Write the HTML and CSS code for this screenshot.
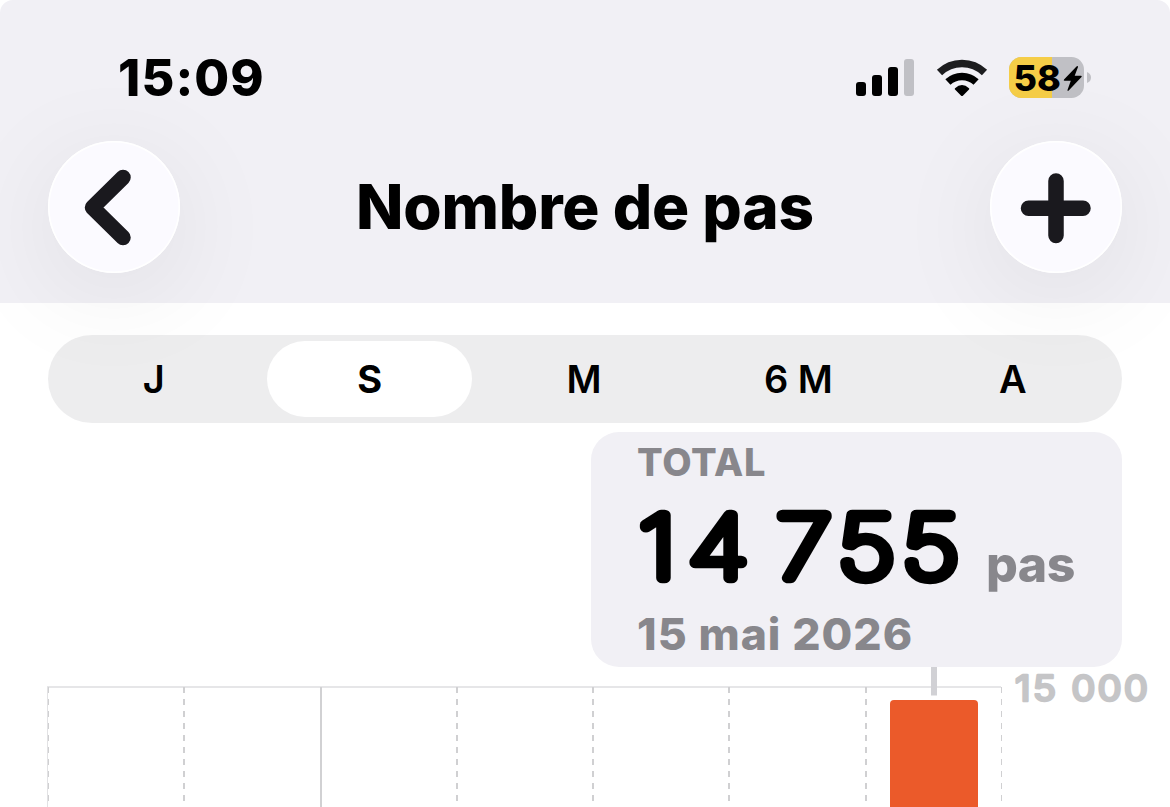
FILE: index.html
```
<!DOCTYPE html>
<html lang="fr">
<head>
  <meta charset="UTF-8" />
  <meta name="viewport" content="width=device-width, initial-scale=1.0"/>
  <title>Nombre de pas</title>
  <link rel="stylesheet" href="styles.css">
</head>
<body>

  <header class="header">
    <div class="status-bar">
      <div class="time">15:09</div>
      <div class="status-icons">
        <!-- Signal -->
        <svg width="58" height="42" viewBox="0 0 58 42">
          <rect x="0" y="25" width="10" height="14" rx="3"/>
          <rect x="16" y="18" width="10" height="21" rx="3"/>
          <rect x="32" y="10" width="10" height="29" rx="3"/>
          <rect x="48" y="2" width="10" height="37" rx="3" fill="#c0c0c5"/>
        </svg>
        <!-- Wifi -->
        <svg width="50" height="42" viewBox="0 0 50 42">
          <path d="M2.5 15.5a32.5 32.5 0 0 1 45 0" fill="none" stroke="#1d1d1f" stroke-width="7.5"/>
          <path d="M10.9 25a20.6 20.6 0 0 1 28.2 0" fill="none" stroke="#000" stroke-width="7.5"/>
          <path d="M18 31.2q7-6.6 14 0q.6.7 0 1.4l-5.9 5.8q-1.1 1-2.2 0l-5.9-5.8q-.6-.7 0-1.4z"/>
        </svg>
        <!-- Battery -->
        <svg class="battery" width="83" height="42" viewBox="0 0 83 42">
          <clipPath id="batteryShape"><rect width="75" height="41" rx="12.5"/></clipPath>
          <g clip-path="url(#batteryShape)">
            <rect width="75" height="41" fill="#c0c0c5"/>
            <rect width="43" height="41" fill="#f5cd47"/>
          </g>
          <path d="M78 15q4 1.5 4 5.5t-4 5.5z" fill="#c0c0c5"/>
          <text x="4.5" y="33.5">58</text>
          <path d="M67.5 9.5L55 22.5q-.8 1.2.6 1.2h6.2L58.5 33q0 1.5 1.2.6L72.5 20q.8-1.2-.6-1.2h-6.2L69 10q0-1.500-1.500-.5z"/>
        </svg>
      </div>
    </div>

    <nav class="nav-bar">
      <button class="round-btn" aria-label="Retour">
        <svg width="132" height="132" viewBox="0 0 132 132"><path d="M75 36.500L44.500 66.500L75 96.500"/></svg>
      </button>
      <h1>Nombre de pas</h1>
      <button class="round-btn" aria-label="Ajouter">
        <svg width="132" height="132" viewBox="0 0 132 132"><path d="M66 40v54.500M38.500 67.300h54.500"/></svg>
      </button>
    </nav>
  </header>

  <main>
    <div class="segments">
      <div class="segment">J</div>
      <div class="segment active">S</div>
      <div class="segment">M</div>
      <div class="segment">6 M</div>
      <div class="segment">A</div>
    </div>

    <section class="summary">
      <div class="summary-label">TOTAL</div>
      <div class="summary-value">
        <svg class="steps" width="349" height="118" viewBox="0 0 349 118">
          <text transform="scale(1.170 1)" y="96.500" x="1.500 43.500 91 119 171.500 226.500">14 755</text>
        </svg>
        <span class="unit">pas</span>
      </div>
      <div class="summary-date">15 mai 2026</div>
    </section>

    <section class="chart">
      <svg class="plot" width="955" height="140" viewBox="1 0 955 140">
        <path d="M0 20H954" stroke="#e6e6e8" stroke-width="2"/>
        <path d="M.5 20V140" stroke="#e2e2e4"/>
        <path class="dashed" d="M137 20V140M410 20V140M546 20V140M682 20V140M819 20V140"/>
        <path class="dashed thin" d="M1.500 20V140M954.500 20V140"/>
        <path d="M274 20V140" stroke="#d1d1d3" stroke-width="2"/>
        <path d="M887 0V28.500" stroke="#d1d1d5" stroke-width="6"/>
        <path d="M843 140V37q0-4 4-4h80q4 0 4 4v103z" fill="#eb5a2a"/>
      </svg>
      <!-- same rounded digits as the total -->
      <svg class="axis-label" width="140" height="42" viewBox="0 0 140 42">
        <text transform="scale(1.080 1)" x="0" y="33.500">15 000</text>
      </svg>
    </section>
  </main>

</body>
</html>
```
FILE: styles.css
```
* {
  box-sizing: border-box;
}

body {
  margin: 0;
  height: 807px;
  overflow: hidden;
  background: #fff;
  color: #000;
  font-family: Inter, "Liberation Sans", sans-serif;
}

svg {
  display: block;
  overflow: visible;
}

.header {
  height: 303px;
  background: #f1f0f5;
  border-radius: 13px 13px 0 0;
}

.status-bar {
  display: flex;
  justify-content: space-between;
  height: 141px;
  padding: 48px 78px 0 118px;
}

.time {
  font-size: 50.5px;
  font-weight: 800;
  line-height: 60px;
  letter-spacing: 1.1px;
}

.status-icons {
  display: flex;
  gap: 22.5px;
  padding-top: 9px;
}

.battery text {
  font-size: 36px;
  font-weight: 800;
}

.nav-bar {
  display: flex;
  justify-content: space-between;
  align-items: center;
  padding: 0 48px;
}

.nav-bar h1 {
  margin: 0;
  font-size: 62px;
  font-weight: 800;
  line-height: 132px;
  letter-spacing: -0.2px;
}

.round-btn {
  width: 132px;
  height: 132px;
  padding: 0;
  border: none;
  border-radius: 50%;
  background: #fbfaff;
  box-shadow: inset 0 0 0 1.5px #fff, 0 20px 110px rgba(0, 0, 20, 0.08);
}

.round-btn path {
  fill: none;
  stroke: #1a191e;
  stroke-width: 15.5;
  stroke-linecap: round;
  stroke-linejoin: round;
}

main {
  padding: 32px 0 0 48px;
}

.segments {
  display: flex;
  width: 1074px;
  height: 88px;
  padding: 6px 2px 6px 0;
  border-radius: 44px;
  background: rgba(118, 118, 120, 0.13);
}

.segment {
  flex: 1;
  margin: 0 5px;
  border-radius: 38px;
  font-size: 38px;
  font-weight: 600;
  line-height: 77px;
  text-align: center;
}

.segment:first-child {
  text-indent: -3px;
}

.segment.active {
  background: #fff;
  font-weight: 700;
}

.summary {
  width: 531px;
  height: 235px;
  margin: 9px 0 0 543px;
  padding: 10px 0 0 46px;
  border-radius: 28px;
  background: #f1f0f5;
}

.summary-label,
.unit,
.summary-date {
  color: #88878c;
  font-weight: 800;
}

.summary-label {
  font-size: 38px;
  line-height: 40px;
  letter-spacing: 0.7px;
}

.summary-value {
  display: flex;
  height: 118px;
}

/* thin digits with a round stroke give the rounded numerals */
.steps text {
  font-size: 87px;
  font-weight: 100;
  stroke: #000;
  stroke-width: 10.5px;
  stroke-linejoin: round;
}

.unit {
  font-size: 50px;
  line-height: 164px;
  letter-spacing: -0.5px;
}

.summary-date {
  font-size: 44.5px;
  line-height: 68px;
  letter-spacing: 1px;
}

.chart {
  display: flex;
}

.dashed {
  stroke: #d0d0d2;
  stroke-width: 2;
  stroke-dasharray: 6 6;
}

.thin {
  stroke-width: 1;
}

.axis-label {
  margin-left: 12px;
}

.axis-label text {
  fill: #c5c5c7;
  stroke: #c5c5c7;
  stroke-width: 2.6px;
  stroke-linejoin: round;
  font-size: 35.5px;
  font-weight: 400;
  letter-spacing: 2px;
}
```
